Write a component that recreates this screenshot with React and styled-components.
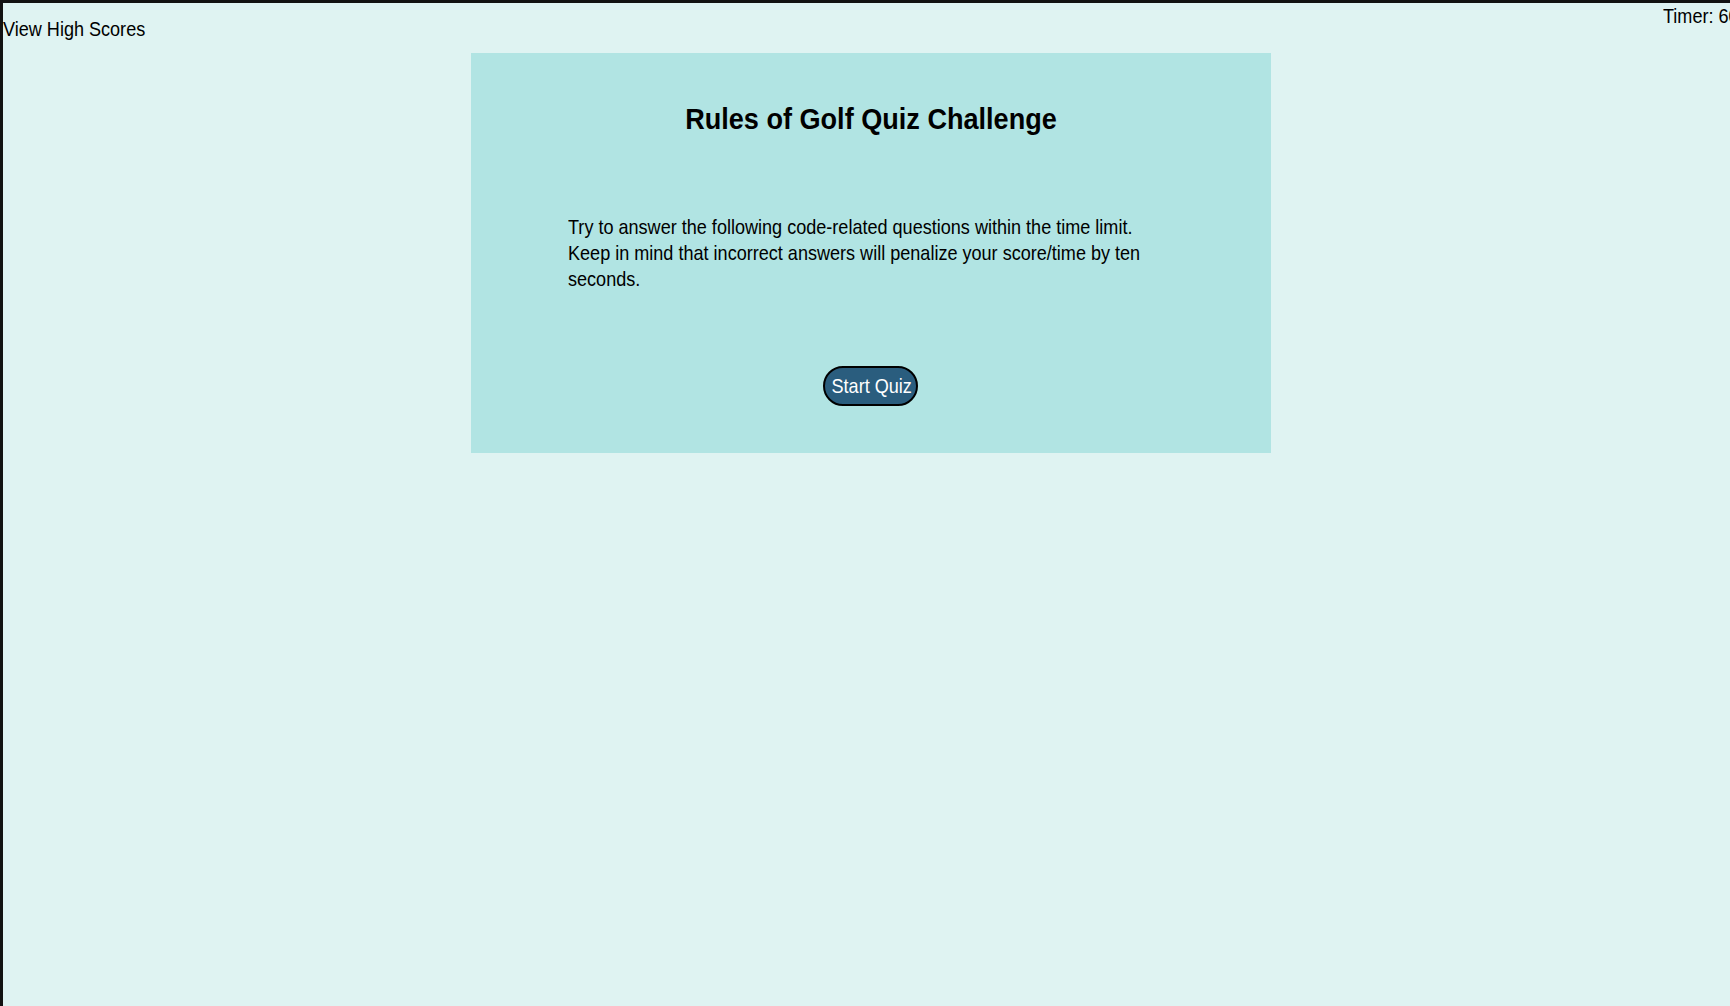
import styled, { createGlobalStyle } from "styled-components";

const GlobalStyle = createGlobalStyle`
  html {
    background: #121212;
  }
  body {
    margin: 3px 0 0 3px;
    min-height: calc(100vh - 3px);
    background: #dff3f2;
    font-family: "Liberation Sans", Arial, sans-serif;
    color: #000;
    overflow-x: hidden;
  }
`;

// the reference uses a narrow face; Liberation Sans squeezed sideways stands in for it
const App = () => {
  return (
    <>
      <GlobalStyle />
      <Header>
        <ScoresLink href="#">
          <Narrow>View High Scores</Narrow>
        </ScoresLink>
        <Timer>
          <Narrow>Timer: 60</Narrow>
        </Timer>
      </Header>
      <Card>
        <Title>
          <Narrow $scale={0.934} $origin="center">
            Rules of Golf Quiz Challenge
          </Narrow>
        </Title>
        <Intro>
          Try to answer the following code-related questions within the time
          limit. Keep in mind that incorrect answers will penalize your
          score/time by ten seconds.
        </Intro>
        <StartButton type="button">
          <Narrow $origin="center">Start Quiz</Narrow>
        </StartButton>
      </Card>
    </>
  );
};

export default App;

const Narrow = styled.span`
  display: inline-block;
  white-space: nowrap;
  transform: scaleX(${(p) => p.$scale || 0.86});
  transform-origin: ${(p) => p.$origin || "left"} top;
`;

const Header = styled.header`
  display: flex;
  justify-content: space-between;
  align-items: flex-start;
  height: 50px;
`;

const ScoresLink = styled.a`
  margin-top: 14px;
  font-size: 21px;
  color: #000;
  text-decoration: none;
`;

const Timer = styled.div`
  margin-top: 1px;
  margin-right: -21px;
  font-size: 21px;
`;

const Card = styled.main`
  width: 800px;
  height: 400px;
  box-sizing: border-box;
  margin: 0 0 0 calc(50% - 396px);
  padding: 50px 97px 0;
  background: #b1e4e3;
  display: flex;
  flex-direction: column;
  align-items: center;
`;

const Title = styled.h1`
  margin: 0;
  font-size: 29px;
  font-weight: bold;
`;

const Intro = styled.p`
  margin: 78px 0 0;
  align-self: flex-start;
  width: 690px;
  font-size: 21px;
  line-height: 26px;
  transform: scaleX(0.86);
  transform-origin: left top;
`;

const StartButton = styled.button`
  margin-top: 74px;
  width: 95px;
  height: 40px;
  padding: 0;
  border: 2px solid #000;
  border-radius: 20px;
  background: #2a5d7e;
  color: #fff;
  font-family: inherit;
  font-size: 21px;
  white-space: nowrap;
  cursor: pointer;
`;
